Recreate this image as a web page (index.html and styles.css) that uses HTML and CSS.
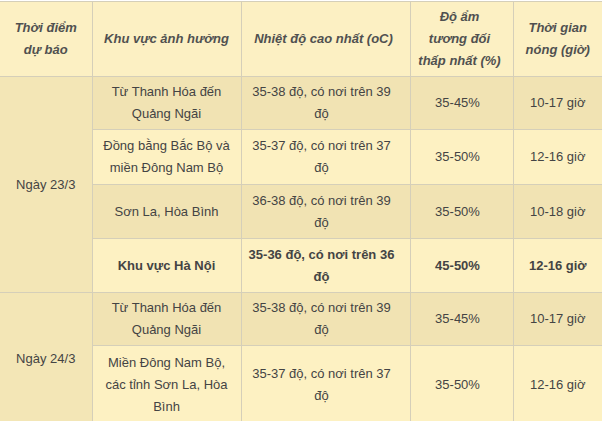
FILE: index.html
```html
<!DOCTYPE html>
<html lang="vi">
<head>
<meta charset="utf-8">
<link rel="stylesheet" href="styles.css">
</head>
<body>
<div class="wrap">
<table class="forecast">
  <colgroup>
    <col class="c1"><col class="c2"><col class="c3"><col class="c4"><col class="c5">
  </colgroup>
  <thead>
    <tr>
      <th class="first">Thời điểm dự báo</th>
      <th>Khu vực ảnh hưởng</th>
      <th class="shift">Nhiệt độ cao nhất (oC)</th>
      <th class="shift">Độ ẩm<br>tương đối<br>thấp nhất (%)</th>
      <th class="last">Thời gian nóng (giờ)</th>
    </tr>
  </thead>
  <tbody>
    <tr class="dark">
      <td class="first day" rowspan="4">Ngày 23/3</td>
      <td>Từ Thanh Hóa đến Quảng Ngãi</td>
      <td class="shift">35-38 độ, có nơi trên 39 độ</td>
      <td class="shift">35-45%</td>
      <td class="last">10-17 giờ</td>
    </tr>
    <tr class="light r2">
      <td>Đồng bằng Bắc Bộ và miền Đông Nam Bộ</td>
      <td class="shift">35-37 độ, có nơi trên 37 độ</td>
      <td class="shift">35-50%</td>
      <td class="last">12-16 giờ</td>
    </tr>
    <tr class="dark r3">
      <td>Sơn La, Hòa Bình</td>
      <td class="shift">36-38 độ, có nơi trên 39 độ</td>
      <td class="shift">35-50%</td>
      <td class="last">10-18 giờ</td>
    </tr>
    <tr class="light bold r3">
      <td>Khu vực Hà Nội</td>
      <td class="shift">35-36 độ, có nơi trên 36 độ</td>
      <td class="shift">45-50%</td>
      <td class="last">12-16 giờ</td>
    </tr>
    <tr class="dark">
      <td class="first day" rowspan="2">Ngày 24/3</td>
      <td>Từ Thanh Hóa đến Quảng Ngãi</td>
      <td class="shift">35-38 độ, có nơi trên 39 độ</td>
      <td class="shift">35-45%</td>
      <td class="last">10-17 giờ</td>
    </tr>
    <tr class="light r6">
      <td>Miền Đông Nam Bộ, các tỉnh Sơn La, Hòa Bình</td>
      <td class="shift">35-37 độ, có nơi trên 37 độ</td>
      <td class="shift">35-50%</td>
      <td class="last">12-16 giờ</td>
    </tr>
  </tbody>
</table>
</div>
</body>
</html>
```
FILE: styles.css
```css
html, body {
  margin: 0;
  padding: 0;
  background: #ffffff;
}
.wrap {
  padding-top: 1px;
  width: 602px;
  height: 421px;
  overflow: hidden;
  box-sizing: border-box;
}
.forecast {
  border-collapse: collapse;
  table-layout: fixed;
  width: 602px;
  font-family: "Liberation Sans", Arial, sans-serif;
  font-size: 13px;
  line-height: 22px;
  color: #444444;
}
.c1 { width: 92px; }
.c2 { width: 149px; }
.c3 { width: 169px; }
.c4 { width: 103px; }
.c5 { width: 89px; }
.forecast th,
.forecast td {
  border: 1px solid #d5cfb9;
  padding: 4px 6px;
  text-align: center;
  vertical-align: middle;
}
.forecast th {
  background: #fcf0c3;
  font-weight: bold;
  font-style: italic;
  color: #505050;
  height: 66px;
}
.forecast .first { border-left: none; }
.forecast .last { border-right: none; }
.forecast td.shift { padding-right: 14px; }
.forecast th.shift { padding-right: 10px; }
.dark td { background: #f1e3b3; }
.light td { background: #fdf1c2; }
.forecast td.day { background: #f3e6b6; }
.r2 td { height: 46px; }
.r3 td { height: 45px; }
.r6 td { height: 70px; }
.bold td { font-weight: bold; }
```
